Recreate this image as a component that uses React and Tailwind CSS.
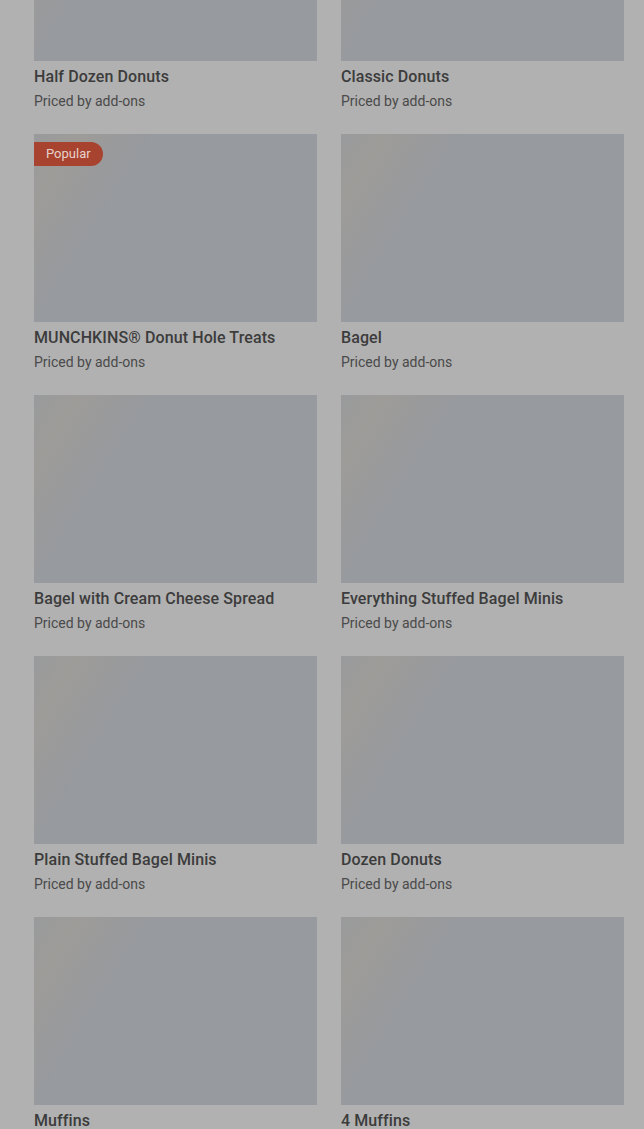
import React from "react";

const ITEMS = [
  { name: "Half Dozen Donuts" },
  { name: "Classic Donuts" },
  { name: "MUNCHKINS® Donut Hole Treats", badge: "Popular" },
  { name: "Bagel" },
  { name: "Bagel with Cream Cheese Spread" },
  { name: "Everything Stuffed Bagel Minis" },
  { name: "Plain Stuffed Bagel Minis" },
  { name: "Dozen Donuts" },
  { name: "Muffins" },
  { name: "4 Muffins" },
];

const ItemCard = ({ item }) => (
  <div className="flex flex-col">
    <div className="relative h-[188px] w-full bg-[linear-gradient(122deg,#999a9c_0%,#9d9c99_11%,#9a9a9b_20%,#979a9e_30%,#979a9e_100%)]">
      {item.badge && (
        <span className="absolute left-0 top-2 flex h-6 items-center rounded-r-full bg-[#a8432f] pl-3 pr-3 text-[13px] text-[#e6d2cc]">
          {item.badge}
        </span>
      )}
    </div>
    <p className="mt-[6px] text-base font-medium leading-5 tracking-[0.1px] text-[#3c3c3c]">{item.name}</p>
    <p className="mt-[4px] text-sm leading-5 text-[#4a4a4a]">Priced by add-ons</p>
  </div>
);

export default function App() {
  return (
    <div
      className="h-[1129px] overflow-hidden bg-[#b1b1b1]"
      style={{ fontFamily: "Roboto, 'Liberation Sans', sans-serif" }}
    >
      <div className="-mt-[127px] grid grid-cols-2 gap-x-6 gap-y-[23px] pl-[34px] pr-[20px]">
        {ITEMS.map((item) => (
          <ItemCard key={item.name} item={item} />
        ))}
      </div>
    </div>
  );
}
